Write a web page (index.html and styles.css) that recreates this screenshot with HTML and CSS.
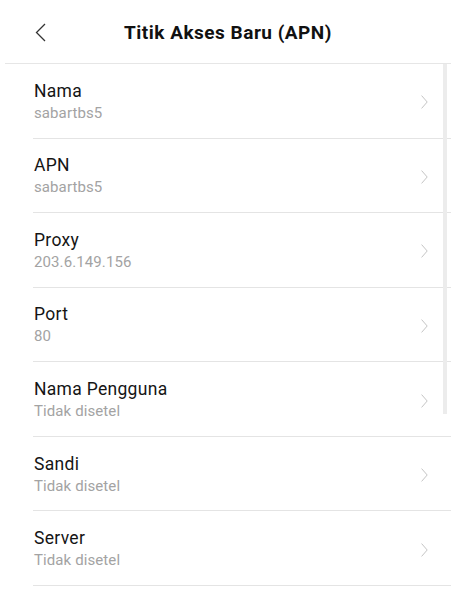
FILE: index.html
```html
<!DOCTYPE html>
<html lang="id">
<head>
    <meta charset="UTF-8">
    <meta name="viewport" content="width=device-width, initial-scale=1.0">
    <title>Titik Akses Baru (APN)</title>
    <link rel="stylesheet" href="styles.css">
</head>
<body>
    <div class="screen">
        <header class="top-bar">
            <button class="back-btn" aria-label="Kembali">
                <svg width="12" height="19" viewBox="0 0 12 19">
                    <path d="M11 1 L2.5 9.5 L11 18" fill="none" stroke="#333" stroke-width="1.3"/>
                </svg>
            </button>
            <h1>Titik Akses Baru (APN)</h1>
        </header>

        <div class="settings">
            <div class="row">
                <div class="row-text">
                    <div class="label">Nama</div>
                    <div class="value">sabartbs5</div>
                </div>
                <svg class="chevron" width="7" height="14" viewBox="0 0 7 14"><path d="M0.6 0.6 L6.2 7 L0.6 13.4" fill="none" stroke="#c4c4c4" stroke-width="1"/></svg>
            </div>
            <div class="row">
                <div class="row-text">
                    <div class="label">APN</div>
                    <div class="value">sabartbs5</div>
                </div>
                <svg class="chevron" width="7" height="14" viewBox="0 0 7 14"><path d="M0.6 0.6 L6.2 7 L0.6 13.4" fill="none" stroke="#c4c4c4" stroke-width="1"/></svg>
            </div>
            <div class="row">
                <div class="row-text">
                    <div class="label">Proxy</div>
                    <div class="value">203.6.149.156</div>
                </div>
                <svg class="chevron" width="7" height="14" viewBox="0 0 7 14"><path d="M0.6 0.6 L6.2 7 L0.6 13.4" fill="none" stroke="#c4c4c4" stroke-width="1"/></svg>
            </div>
            <div class="row">
                <div class="row-text">
                    <div class="label">Port</div>
                    <div class="value">80</div>
                </div>
                <svg class="chevron" width="7" height="14" viewBox="0 0 7 14"><path d="M0.6 0.6 L6.2 7 L0.6 13.4" fill="none" stroke="#c4c4c4" stroke-width="1"/></svg>
            </div>
            <div class="row">
                <div class="row-text">
                    <div class="label">Nama Pengguna</div>
                    <div class="value">Tidak disetel</div>
                </div>
                <svg class="chevron" width="7" height="14" viewBox="0 0 7 14"><path d="M0.6 0.6 L6.2 7 L0.6 13.4" fill="none" stroke="#c4c4c4" stroke-width="1"/></svg>
            </div>
            <div class="row">
                <div class="row-text">
                    <div class="label">Sandi</div>
                    <div class="value">Tidak disetel</div>
                </div>
                <svg class="chevron" width="7" height="14" viewBox="0 0 7 14"><path d="M0.6 0.6 L6.2 7 L0.6 13.4" fill="none" stroke="#c4c4c4" stroke-width="1"/></svg>
            </div>
            <div class="row">
                <div class="row-text">
                    <div class="label">Server</div>
                    <div class="value">Tidak disetel</div>
                </div>
                <svg class="chevron" width="7" height="14" viewBox="0 0 7 14"><path d="M0.6 0.6 L6.2 7 L0.6 13.4" fill="none" stroke="#c4c4c4" stroke-width="1"/></svg>
            </div>

            <!-- scroll indicator drawn over the list -->
            <div class="scrollbar"></div>
        </div>
    </div>
</body>
</html>
```

FILE: styles.css
```css
* {
    margin: 0;
    padding: 0;
    box-sizing: border-box;
    font-family: Roboto, "Noto Sans", sans-serif;
}

body {
    background: #fff;
    color: #1a1a1a;
}

.screen {
    width: 446px;
    margin-left: 5px;
}

.top-bar {
    height: 64px;
    display: flex;
    align-items: center;
    justify-content: center;
    position: relative;
    border-bottom: 1px solid #e6e6e6;
}

.back-btn {
    position: absolute;
    left: 29px;
    top: 23px;
    background: none;
    border: none;
    cursor: pointer;
    display: flex;
}

.top-bar h1 {
    font-size: 19px;
    font-weight: 700;
    letter-spacing: 0.5px;
    color: #111;
    margin-top: 2px;
}

.settings {
    position: relative;
    margin-left: 28px;
}

.row {
    height: 74.57px;
    display: flex;
    align-items: center;
    justify-content: space-between;
    padding: 0 23px 0 1px;
    border-bottom: 1px solid #e4e4e4;
}

.row-text {
    display: flex;
    flex-direction: column;
    gap: 3px;
    margin-top: 1px;
}

.label {
    font-size: 17.5px;
    letter-spacing: 0.3px;
    color: #151515;
    line-height: 20px;
}

.value {
    font-size: 15px;
    letter-spacing: 0.1px;
    color: #a3a3a3;
    line-height: 18px;
}

.chevron {
    margin-top: 3px;
}

.scrollbar {
    position: absolute;
    right: 4px;
    top: 0;
    width: 4px;
    height: 350px;
    background: #ececec;
}
```
